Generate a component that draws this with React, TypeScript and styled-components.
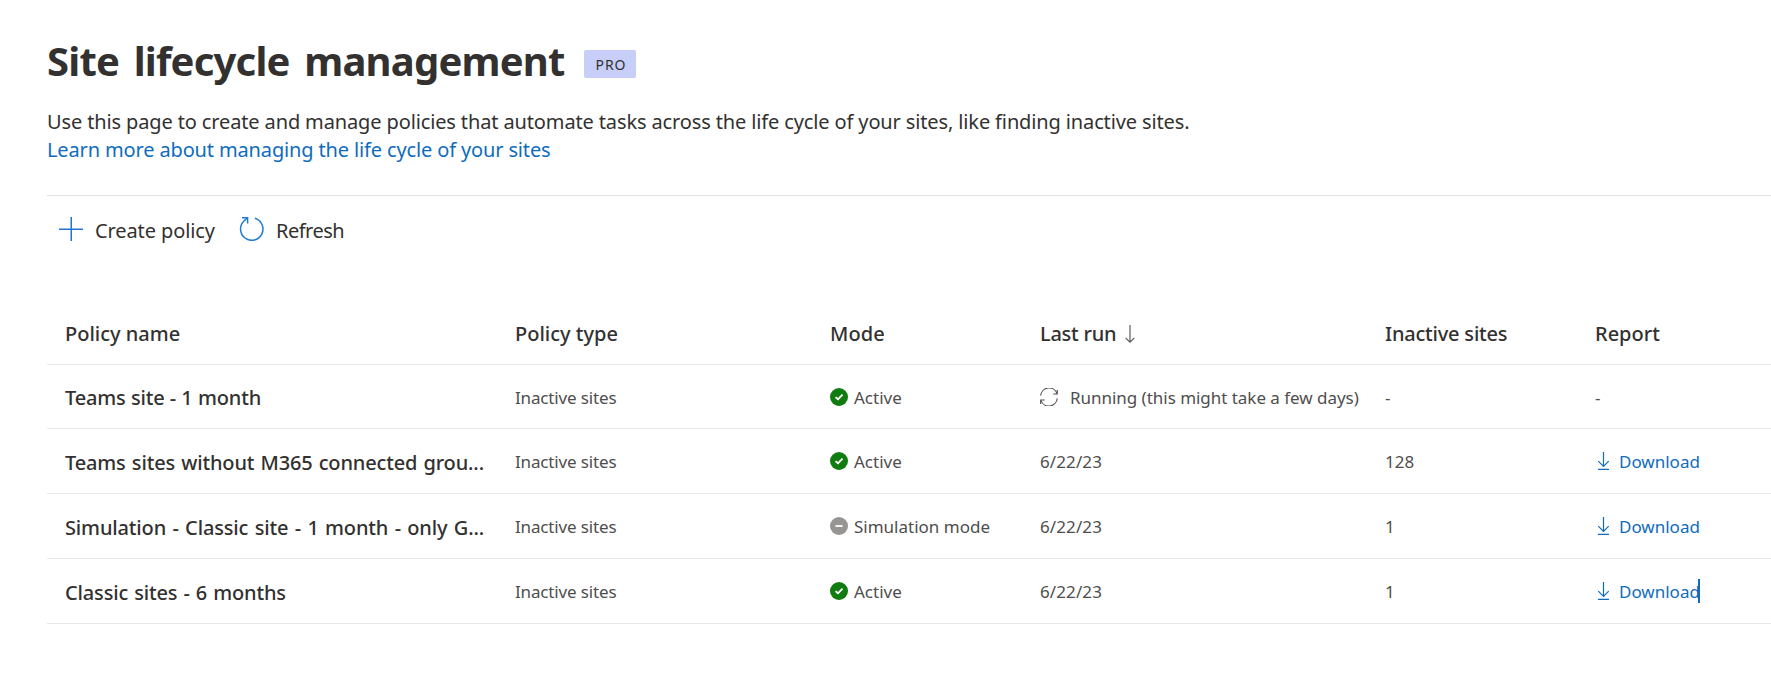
import React from "react";
import styled, { createGlobalStyle } from "styled-components";

const GlobalStyle = createGlobalStyle`
  * { box-sizing: border-box; }
  body {
    margin: 0;
    background: #fff;
    color: #323130;
    font-family: "Noto Sans", "Open Sans", sans-serif;
    font-size: 20px;
    line-height: 28px;
  }
`;

const Page = styled.main`
  min-height: 693px;
  padding: 32px 0 0 47px;
  overflow: hidden;
`;

const TitleRow = styled.header`
  display: flex;
  align-items: center;
  height: 63px;
  padding-bottom: 5px;
`;

const Title = styled.h1`
  margin: 0;
  width: 537px;
  font-size: 40px;
  line-height: 58px;
  font-weight: 700;
  letter-spacing: -0.8px;
  word-spacing: 5px;
  white-space: nowrap;
`;

const Badge = styled.span`
  width: 52px;
  height: 28px;
  margin-top: 5px;
  border-radius: 2px;
  background: #c7cff9;
  font-size: 14px;
  line-height: 29px;
  letter-spacing: 0.9px;
  text-indent: 2px;
  text-align: center;
`;

const Description = styled.p`
  margin: 13px 0 0;
  letter-spacing: -0.13px;
  white-space: nowrap;
`;

const LearnMore = styled.a`
  display: block;
  width: max-content;
  color: #0f6cbd;
  letter-spacing: -0.14px;
  text-decoration: none;
`;

const Toolbar = styled.div`
  display: flex;
  align-items: center;
  height: 69px;
  margin-top: 31px;
  padding-left: 12px;
  border-top: 1px solid #e1dfdd;
`;

const Command = styled.button<{ $width: number; $track: number }>`
  display: flex;
  align-items: center;
  gap: 12px;
  width: ${(p) => p.$width}px;
  padding: 2px 0 0;
  border: 0;
  background: none;
  color: inherit;
  font: inherit;
  letter-spacing: ${(p) => p.$track}px;
  white-space: nowrap;

  svg { flex: none; margin-top: -4px; }
`;

const Table = styled.div`
  margin-top: 37px;
`;

const Row = styled.div<{ $height: number }>`
  display: grid;
  grid-template-columns: 450px 315px 210px 345px 210px 1fr;
  align-items: center;
  height: ${(p) => p.$height}px;
  padding-left: 18px;
  border-bottom: 1px solid #e9e8e8;
  white-space: nowrap;
`;

const HeadCell = styled.div<{ $track?: number }>`
  display: flex;
  align-items: center;
  gap: 9px;
  padding-top: 2px;
  font-weight: 500;
  letter-spacing: ${(p) => p.$track ?? 0}px;
`;

const NameCell = styled.div<{ $wordGap: number }>`
  padding-top: 3px;
  font-weight: 500;
  letter-spacing: -0.15px;
  word-spacing: ${(p) => p.$wordGap}px;
`;

const Cell = styled.div<{ $gap?: number; $track?: number }>`
  display: flex;
  align-items: center;
  gap: ${(p) => p.$gap ?? 0}px;
  color: #4f4e4d;
  font-size: 17px;
  letter-spacing: ${(p) => p.$track ?? 0}px;

  svg { flex: none; }
`;

const CellText = styled.span`
  padding-top: 2px;
`;

const Download = styled.a`
  display: flex;
  align-items: center;
  gap: 8px;
  color: #0f6cbd;
  font-size: 17px;
  text-decoration: none;
`;

const Caret = styled.span`
  width: 2px;
  height: 24px;
  margin-left: -2px;
  background: #0f6cbd;
`;

const PlusIcon = () => (
  <svg width="24" height="24" viewBox="0 0 24 24" fill="none" stroke="#1f74d4" strokeWidth="1.5">
    <path d="M12.25 0v24M0 12.25h24" />
  </svg>
);

const RefreshIcon = () => (
  <svg width="25" height="24" viewBox="0 0 25 24" fill="none" stroke="#1f7ad8" strokeWidth="1.5">
    <path d="M15.8 1.3A11.2 11.2 0 1 1 5.2 3.8L8.4.9" />
    <path d="M3 .8h5.6v5.6" />
  </svg>
);

const SortIcon = () => (
  <svg width="10" height="18" viewBox="0 0 10 18" fill="none" stroke="#605e5c" strokeWidth="1.2">
    <path d="M5 0v17M.6 12.8 5 17.2l4.4-4.4" />
  </svg>
);

const SyncIcon = () => (
  <svg width="18" height="18" viewBox="0 0 18 18" fill="none" stroke="#4f4e4d" strokeWidth="1.1">
    <path d="M.7 7.6A8.4 8.4 0 0 1 17 5.6M17.3 10.4A8.4 8.4 0 0 1 1 12.4" />
    <path d="M17.3 2v4h-4M.7 16v-4h4" />
  </svg>
);

const ActiveIcon = () => (
  <svg width="18" height="18" viewBox="0 0 18 18" fill="none">
    <circle cx="9" cy="9" r="9" fill="#107c10" />
    <path d="m5.6 9.1 2.4 2.2 4.5-4.6" stroke="#fff" strokeWidth="1.9" />
  </svg>
);

const SimulationIcon = () => (
  <svg width="18" height="18" viewBox="0 0 18 18" fill="none">
    <circle cx="9" cy="9" r="9" fill="#979593" />
    <path d="M5.4 9h7.2" stroke="#fff" strokeWidth="1.8" />
  </svg>
);

const DownloadIcon = () => (
  <svg width="16" height="18" viewBox="0 0 16 18" fill="none" stroke="#0f6cbd" strokeWidth="1.2">
    <path d="M8.5 0v14M3.3 9.2l5.2 5.2 5.2-5.2M3 17.4h11" />
  </svg>
);

type Policy = {
  name: string;
  wordGap: number;
  active: boolean;
  lastRun: string;
  running?: boolean;
  sites: string;
  report: boolean;
  focused?: boolean;
};

const policies: Policy[] = [
  { name: "Teams site - 1 month", wordGap: 0.2, active: true, lastRun: "Running (this might take a few days)", running: true, sites: "-", report: false },
  { name: "Teams sites without M365 connected grou...", wordGap: 1.1, active: true, lastRun: "6/22/23", sites: "128", report: true },
  { name: "Simulation - Classic site - 1 month - only G...", wordGap: 1.35, active: false, lastRun: "6/22/23", sites: "1", report: true },
  { name: "Classic sites - 6 months", wordGap: 1, active: true, lastRun: "6/22/23", sites: "1", report: true, focused: true },
];

export default function App() {
  return (
    <Page>
      <GlobalStyle />
      <TitleRow>
        <Title>Site lifecycle management</Title>
        <Badge>PRO</Badge>
      </TitleRow>
      <Description>
        Use this page to create and manage policies that automate tasks across the life cycle of your sites, like finding inactive sites.
      </Description>
      <LearnMore>Learn more about managing the life cycle of your sites</LearnMore>
      <Toolbar>
        <Command $width={180} $track={-0.1}><PlusIcon />Create policy</Command>
        <Command $width={110} $track={-0.5}><RefreshIcon />Refresh</Command>
      </Toolbar>
      <Table>
        <Row $height={64}>
          <HeadCell>Policy name</HeadCell>
          <HeadCell>Policy type</HeadCell>
          <HeadCell $track={0.1}>Mode</HeadCell>
          <HeadCell $track={-0.25}>Last run<SortIcon /></HeadCell>
          <HeadCell $track={-0.2}>Inactive sites</HeadCell>
          <HeadCell>Report</HeadCell>
        </Row>
        {policies.map((p, i) => (
          <Row key={p.name} $height={i === 0 ? 64 : 65}>
            <NameCell $wordGap={p.wordGap}>{p.name}</NameCell>
            <Cell $track={-0.15}><CellText>Inactive sites</CellText></Cell>
            <Cell $gap={6}>
              {p.active ? <ActiveIcon /> : <SimulationIcon />}
              <CellText>{p.active ? "Active" : "Simulation mode"}</CellText>
            </Cell>
            <Cell $gap={12} $track={p.running ? -0.03 : 0.1}>
              {p.running && <SyncIcon />}
              <CellText>{p.lastRun}</CellText>
            </Cell>
            <Cell><CellText>{p.sites}</CellText></Cell>
            <Cell>
              {p.report ? (
                <Download><DownloadIcon /><CellText>Download</CellText></Download>
              ) : (
                <CellText>-</CellText>
              )}
              {p.focused && <Caret />}
            </Cell>
          </Row>
        ))}
      </Table>
    </Page>
  );
}
